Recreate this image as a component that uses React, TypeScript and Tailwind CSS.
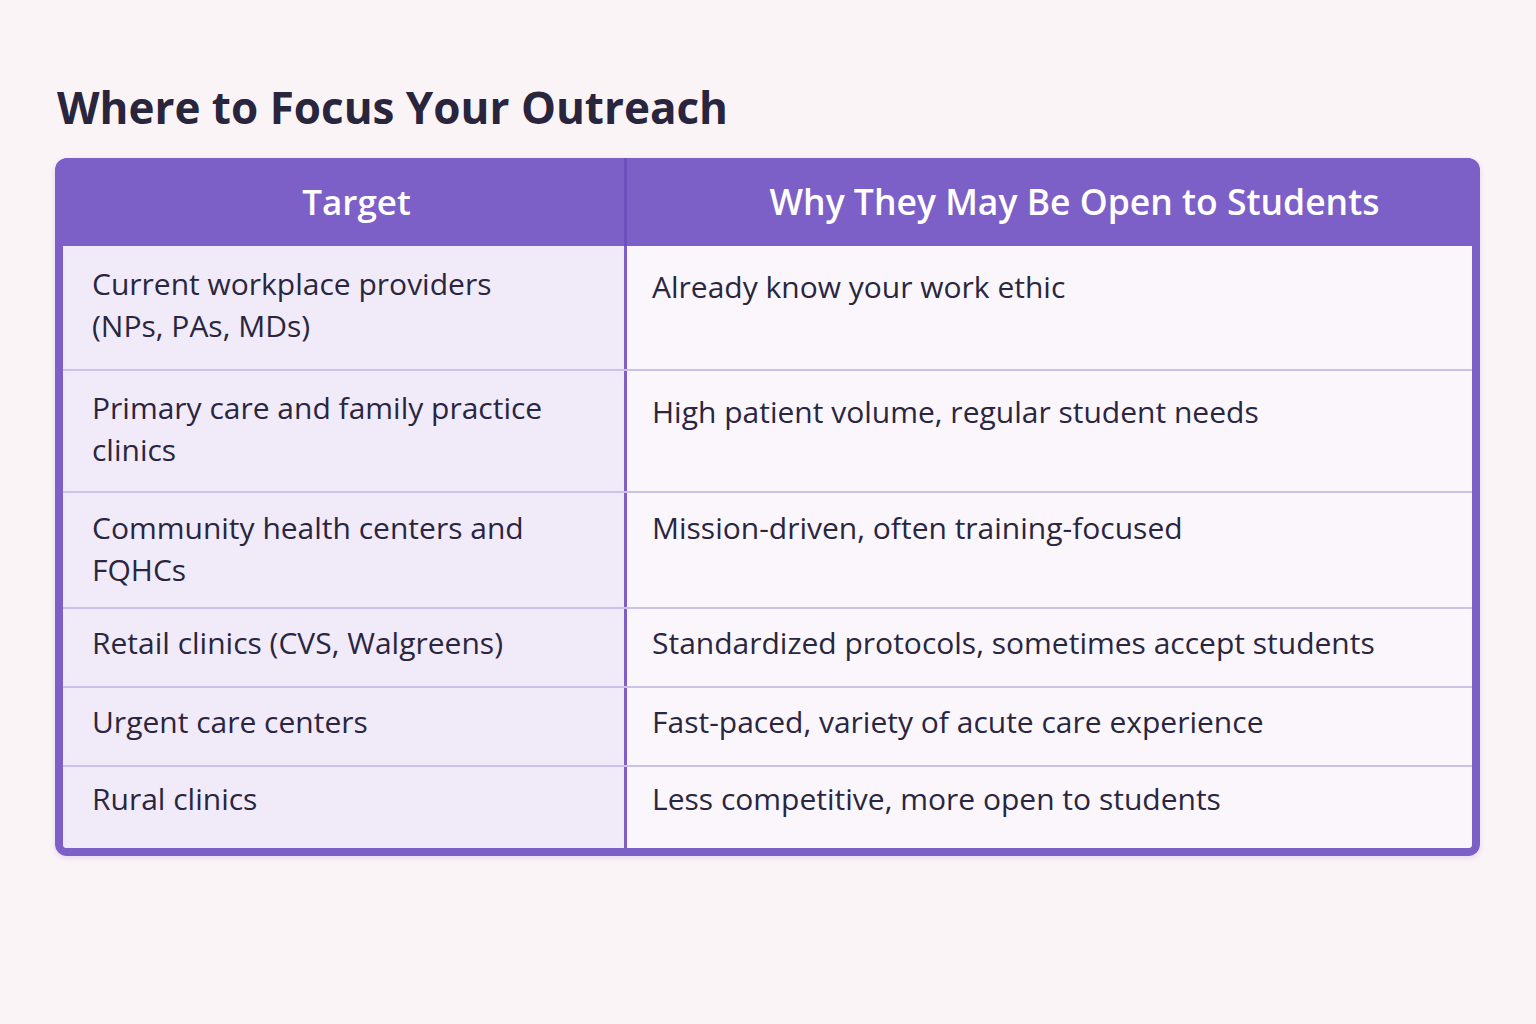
import React from "react";

const rows = [
  { target: "Current workplace providers (NPs, PAs, MDs)", why: "Already know your work ethic", h: "h-[123px]", pl: "pt-[17px]", pr: "pt-[20px]" },
  { target: "Primary care and family practice clinics", why: "High patient volume, regular student needs", h: "h-[122px]", pl: "pt-[16px]", pr: "pt-[20px]" },
  { target: "Community health centers and FQHCs", why: "Mission-driven, often training-focused", h: "h-[116px]", pl: "pt-[14px]", pr: "pt-[14px]" },
  { target: "Retail clinics (CVS, Walgreens)", why: "Standardized protocols, sometimes accept students", h: "h-[79px]", pl: "pt-[13px]", pr: "pt-[13px]" },
  { target: "Urgent care centers", why: "Fast-paced, variety of acute care experience", h: "h-[79px]", pl: "pt-[13px]", pr: "pt-[13px]" },
  { target: "Rural clinics", why: "Less competitive, more open to students", h: "h-[83px]", pl: "pt-[11px]", pr: "pt-[11px]" },
];

export default function App() {
  return (
    <div className="min-h-screen w-full bg-[#fbf4f7] px-[55px] pt-[78px] font-['Open_Sans',sans-serif] text-[#2a2640]">
      {/* Title */}
      <h1 className="pl-[2px] text-[44px] font-bold leading-[58px] text-[#29253d]">
        Where to Focus Your Outreach
      </h1>

      {/* Table */}
      <div className="mt-[22px] w-[1425px] overflow-hidden rounded-[12px] border-[8px] border-t-0 border-[#7d5fc8] bg-[#7d5fc8] shadow-[0_2px_6px_rgba(90,60,160,0.15)]">
        <div className="flex h-[88px] items-center bg-[#7d5fc8] text-white">
          <div className="flex h-full w-[561px] items-center justify-center pl-[26px] text-[35px] font-semibold">Target</div>
          <div className="h-full w-[3px] bg-[#6c50bb]" />
          <div className="flex h-full flex-1 items-center justify-center pl-[50px] text-[35.5px] font-semibold">
            Why They May Be Open to Students
          </div>
        </div>
        <div className="flex flex-col bg-[#faf4f9]">
          {rows.map((r, i) => (
            <div
              key={i}
              className={`flex ${r.h} ${i > 0 ? "border-t-2 border-[#cfc0e8]" : ""}`}
            >
              <div className={`w-[561px] bg-[#f1eaf8] pl-[29px] pr-[62px] ${r.pl} text-[30px] leading-[42px]`}>
                {r.target}
              </div>
              <div className="w-[3px] bg-[#7d5fc8]" />
              <div className={`flex-1 bg-[#fbf6fb] pl-[25px] pr-4 ${r.pr} text-[30px] leading-[42px]`}>
                {r.why}
              </div>
            </div>
          ))}
        </div>
      </div>
    </div>
  );
}
